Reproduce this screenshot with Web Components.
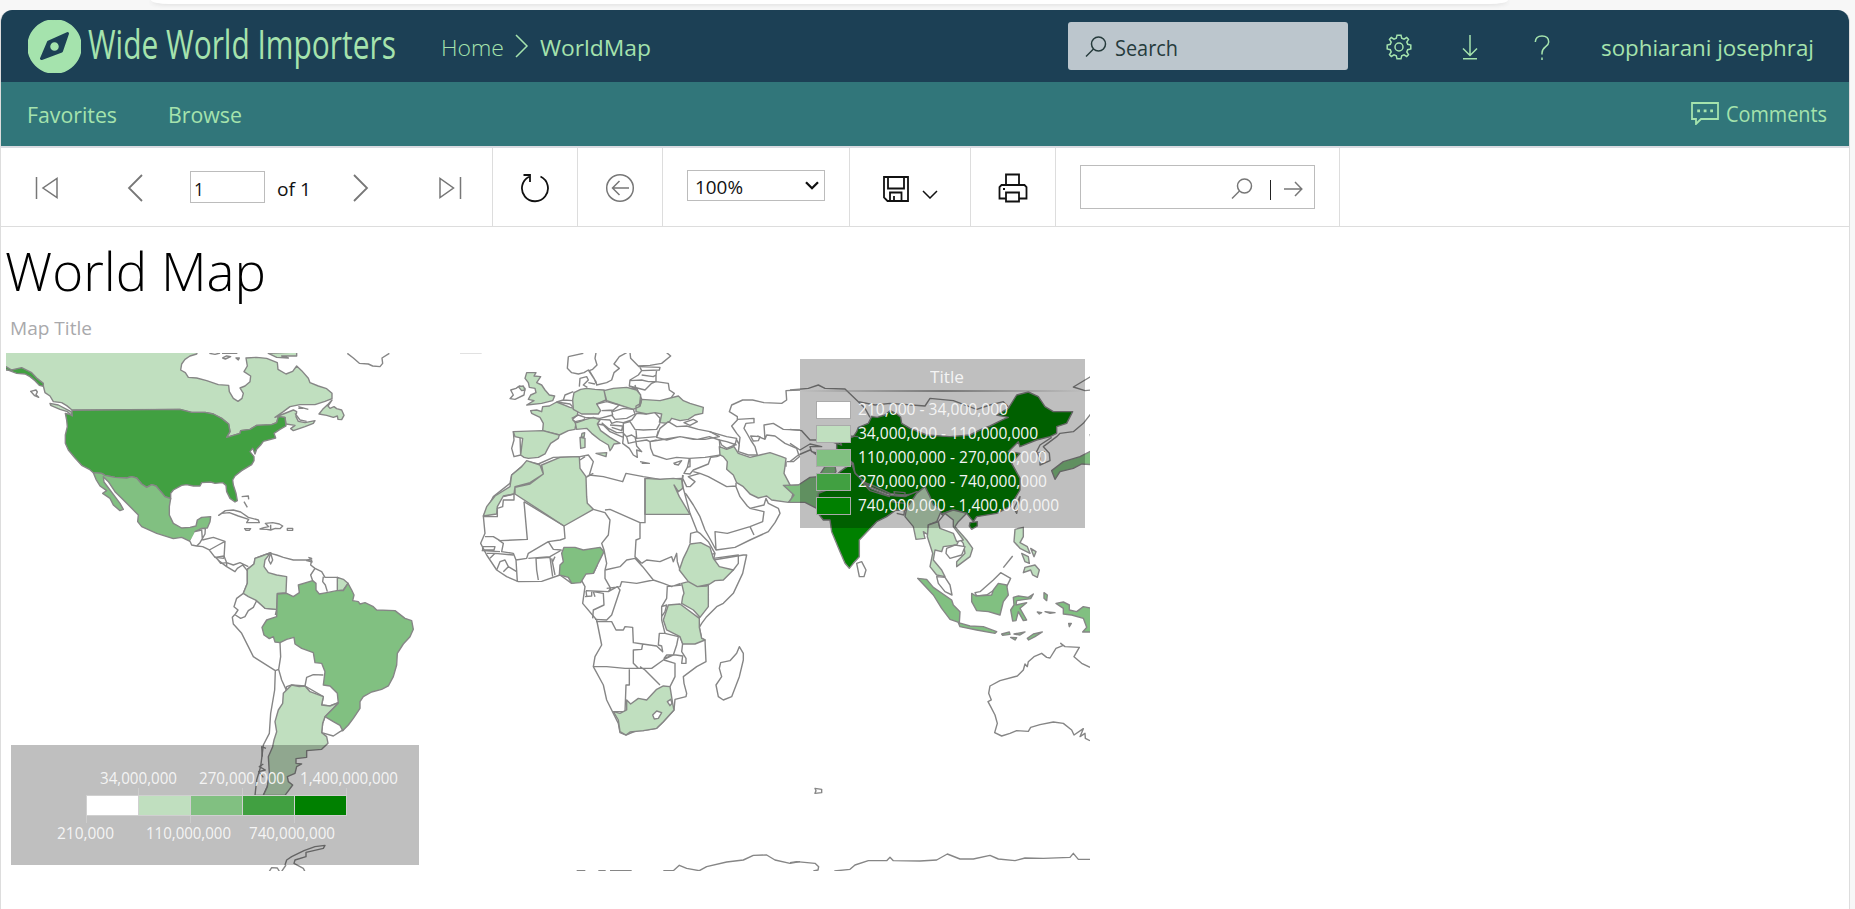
<!DOCTYPE html>
<html lang="en">
<head>
<meta charset="utf-8">
<title>World Map</title>
<style>
html,body{margin:0;height:100%;overflow:hidden;background:#f7f7f7;font-family:"Open Sans","Noto Sans",sans-serif}
</style>
</head>
<body>
<report-portal></report-portal>
<script>
const define=(name,html,setup)=>customElements.define(name,class extends HTMLElement{
  constructor(){super();const t=document.createElement('template');t.innerHTML=html;this.attachShadow({mode:'open'}).append(t.content.cloneNode(true))}
  connectedCallback(){if(setup)setup(this,this.shadowRoot)}
});

/* A single line of text squeezed or stretched to a given width. */
define('fit-text',`<style>:host{display:block;flex:none;white-space:nowrap;line-height:1.3}span{display:inline-block;transform-origin:0 50%}</style><span><slot></slot></span>`,
(h,r)=>{const s=r.querySelector('span'),w=+h.getAttribute('w');h.style.width=w+'px';h.style.fontSize=h.getAttribute('size')+'px';
  const n=s.offsetWidth||w;s.style.transform='translateY('+(h.getAttribute('dy')||0)+'px) scaleX('+(w/s.getBoundingClientRect().width||w/n)+')'});

const ICONS={
 logo:[53,53,'<circle cx="26.5" cy="26.500" r="26.500" fill="#a5e3ad"/><path d="M13.500 38.500 20.500 22 39.500 13.500 33.500 31Z" fill="#1c4055" stroke="#1c4055" stroke-width="3" stroke-linejoin="round"/><circle cx="26.5" cy="26.500" r="3.500" fill="#a5e3ad"/>'],
 crumb:[14,24,'<path d="M1 1 12 12 1 23"/>'],
 lens:[22,22,'<circle cx="13.500" cy="8" r="7"/><path d="M8.500 13 1 20.500"/>'],
 gear:[26,26,'<circle cx="13" cy="13" r="4"/><path d="M11 1.200H15L15.700 4.300 18 5.200 20.700 3.500 22.500 5.300 20.800 8 21.700 10.300 24.800 11V15L21.700 15.700 20.800 18 22.500 20.700 20.700 22.500 18 20.800 15.700 21.700 15 24.800H11L10.300 21.700 8 20.800 5.300 22.500 3.500 20.700 5.200 18 4.300 15.700 1.200 15V11L4.300 10.300 5.200 8 3.500 5.300 5.300 3.500 8 5.200 10.300 4.300Z"/>'],
 down:[16,25,'<path d="M8 0V20M1 13.500 8 20.500 15 13.500M1 23.700H15"/>'],
 help:[16,25,'<path d="M1.300 7C1.500 3 4 1 8 1 12 1 14.700 3.300 14.700 7 14.700 12 8 11.500 8 18V19.500M8 22.500V25"/>'],
 comment:[28,23,'<path d="M1 1H27V17H10L5 22V17H1Z" stroke-width="1.800"/><path d="M6.200 7.500h2.800v2.800h-2.800zM12.700 7.500h2.800v2.800h-2.800zM19.200 7.500h2.800v2.800h-2.800z" fill="currentColor" stroke="none"/>'],
 first:[24,24,'<path d="M1.500 1V23M22 2.500V21.500L8 12Z"/>'],
 last:[24,24,'<path d="M22.500 1V23M2 2.500V21.500L15.500 12Z"/>'],
 prev:[16,28,'<path d="M15 1 2 14 15 27" stroke-width="1.800"/>'],
 next:[16,28,'<path d="M1 1 14 14 1 27" stroke-width="1.800"/>'],
 refresh:[30,30,'<path d="M20.500 3.500A13 13 0 1 1 9 3.700M3.500 2H10V9" stroke-width="1.800"/>'],
 back:[30,30,'<circle cx="15" cy="15" r="13.300"/><path d="M24 15H7.500M14.500 8 7.500 15 14.500 22"/>'],
 caret:[14,9,'<path d="M1 1.200 7 7.200 13 1.200" stroke-width="2.300"/>'],
 save:[26,26,'<path d="M1 1H25V25H4.500L1 21.500ZM5 1V12.500H21V1M7 25V16.500H18.500V25M11 25V20" stroke-width="1.800"/>'],
 small:[16,9,'<path d="M1 1 8 8 15 1"/>'],
 print:[30,30,'<path d="M8 12V1.500H21V12M8 25.500H1.500V14L3.500 12H26.500L28.500 14V25.500H21M8 19.500H21V28.500H8Z" stroke-width="1.800"/><path d="M5 15h2v2h-2z" fill="currentColor" stroke="none"/>'],
 go:[19,16,'<path d="M0 8H17.500M11 1 17.800 8 11 15"/>']
};
define('app-icon',`<style>:host{display:block;flex:none}svg{display:block;fill:none;stroke:currentColor;stroke-width:1.5}</style><div></div>`,
(h,r)=>{const [w,t,p]=ICONS[h.getAttribute('name')];r.querySelector('div').innerHTML='<svg width="'+w+'" height="'+t+'" viewBox="0 0 '+w+' '+t+'">'+p+'</svg>'});

define('portal-header',`<style>
:host{display:flex;align-items:center;height:72px;background:#1c4055;color:#a5e3ad}
app-icon{margin-left:var(--g)}fit-text{margin-left:var(--g)}
.home{font-weight:300}
.search{display:flex;align-items:center;margin-left:auto;width:280px;height:48px;border-radius:3px;background:#bcc6cd;color:#263b3c;box-sizing:border-box;padding-left:17px}
</style>
<app-icon name="logo" style="--g:26.5px"></app-icon>
<fit-text w="308" size="39.500" dy="-1.500" style="--g:7px">Wide World Importers</fit-text>
<fit-text class="home" w="63" size="22.500" dy="2" style="--g:45px">Home</fit-text>
<app-icon name="crumb" style="--g:11px"></app-icon>
<fit-text w="111" size="22.500" dy="2" style="--g:11.5px">WorldMap</fit-text>
<div class="search"><app-icon name="lens" style="margin-top:2px"></app-icon><fit-text w="63" size="21.500" dy="1.500" style="--g:8px">Search</fit-text></div>
<app-icon name="gear" style="--g:38px;margin-top:2px"></app-icon>
<app-icon name="down" style="--g:50px;margin-top:2px"></app-icon>
<app-icon name="help" style="--g:56px;margin-top:2px"></app-icon>
<fit-text w="213" size="22.500" dy="2" style="margin:0 35px 0 51.500px">sophiarani josephraj</fit-text>`);

define('portal-nav',`<style>
:host{display:flex;align-items:center;height:64px;background:#31767a;color:#a5e3ad;border-bottom:2px solid #d9dbe1;padding:0 22px 0 26px}
.b{margin-left:51px}app-icon{margin:-2px 7px 0 auto}
</style>
<fit-text w="90" size="22" dy="-0.500">Favorites</fit-text><fit-text class="b" w="74" size="22" dy="-0.500">Browse</fit-text>
<app-icon name="comment"></app-icon><fit-text w="101" size="21.500" dy="0">Comments</fit-text>`);

define('tool-group',`<style>:host{display:flex;align-items:center;box-sizing:border-box;height:78px;border-right:1px solid #ddd;flex:none}</style><slot></slot>`);

define('report-toolbar',`<style>
:host{display:flex;height:78px;border-bottom:1px solid #ddd;color:#111}
.g{color:#777}
tool-group>app-icon{margin-top:2px}
.box{box-sizing:border-box;border:1px solid #bcbcbc;display:flex;align-items:center;flex:none}
.bar{width:1px;height:20px;background:#222;margin:5px 13px 0 17px}
</style>
<tool-group style="width:492px">
<app-icon class="g" name="first" style="margin-left:34px"></app-icon>
<app-icon class="g" name="prev" style="margin-left:68px"></app-icon>
<div class="box" style="width:75px;height:32px;margin-left:47px;padding-left:2.500px"><fit-text w="10" size="19" dy="1.500">1</fit-text></div>
<fit-text w="34" size="19" dy="1.500" style="margin-left:12px">of 1</fit-text>
<app-icon class="g" name="next" style="margin-left:42px"></app-icon>
<app-icon class="g" name="last" style="margin-left:69px"></app-icon>
</tool-group>
<tool-group style="width:85px;justify-content:center"><app-icon name="refresh"></app-icon></tool-group>
<tool-group style="width:85px;justify-content:center"><app-icon class="g" name="back"></app-icon></tool-group>
<tool-group style="width:187px;padding:0 0 3px 24px"><div class="box" style="width:138px;height:31px;padding:0 5px 0 7px;justify-content:space-between"><fit-text w="48" size="19" dy="1.500">100%</fit-text><app-icon name="caret"></app-icon></div></tool-group>
<tool-group style="width:121px;padding-left:33px"><app-icon name="save" style="margin-top:3px"></app-icon><app-icon name="small" style="margin:15px 0 0 13px"></app-icon></tool-group>
<tool-group style="width:85px;justify-content:center"><app-icon name="print"></app-icon></tool-group>
<tool-group style="width:284px;padding-left:24px"><div class="box" style="width:235px;height:44px;padding-right:11px;justify-content:flex-end"><app-icon class="g" name="lens" style="margin-top:3px"></app-icon><div class="bar"></div><app-icon class="g" name="go" style="margin:3px 0 0 0"></app-icon></div></tool-group>`);

define('world-map',`<style>
:host{display:block;width:1084px;height:518px}
svg{display:block}
path{stroke:#868686;stroke-width:4.200;fill:none;stroke-linejoin:round}
.w{fill:#fff}.a{fill:#c0dfbf}.b{fill:#81c081}.c{fill:#41a041}.d{fill:#008000}
</style>
<svg width="1084" height="518" viewBox="6 353 1084 518">
<g transform="translate(0 230) scale(.33333)">
<path class="a" d="M0 360 594 360 590 372 570 378 555 388 545 402 542 420 556 428 565 442 590 444 620 452 655 464 686 466 688 485 700 505 714 514 726 505 730 490 720 474 735 468 750 455 752 438 732 425 742 408 738 384 770 382 800 385 832 398 834 418 858 432 878 424 890 408 905 422 925 445 930 458 955 468 980 476 996 490 996 506 975 514 945 524 900 524 870 530 850 545 825 562 850 552 880 540 890 545 888 560 895 574 915 578 945 572 940 580 915 590 880 602 872 596 885 586 858 582 855 562 835 560 830 578 815 584 770 586 750 598 722 602 720 610 680 622 690 605 686 582 665 565 640 552 615 547 575 547 540 538 216 540 200 527 185 518 160 515 150 498 135 488 130 468 105 450 90 432 60 420 18 420 0 415Z"/>
<path class="c" d="M0 408 18 410 35 420 65 413 95 428 112 446 130 460 130 469 118 466 105 452 90 440 75 432 50 430 18 418Z"/>
<path class="c" d="M216 541 540 538 575 547 615 547 640 552 665 565 686 582 690 605 680 622 720 610 722 602 750 598 770 586 815 584 830 578 835 560 855 562 858 588 840 598 822 610 827 624 790 634 782 645 770 658 765 672 758 655 750 665 762 680 762 692 755 704 725 722 705 738 698 750 700 765 708 790 712 812 705 816 690 805 680 785 678 766 668 758 645 760 632 756 605 758 600 768 580 768 560 764 545 766 520 780 512 790 512 806 495 800 480 782 468 768 455 764 440 772 425 762 410 744 395 740 380 744 345 742 315 736 305 730 280 728 268 718 245 706 225 684 205 660 196 640 196 615 202 590 200 570 196 550 216 555Z"/>
<path class="b" d="M280 728 305 730 315 736 345 742 380 744 395 740 410 744 425 762 440 772 455 764 468 768 480 782 495 800 512 806 508 830 508 855 520 880 545 894 570 892 588 888 592 870 605 862 632 860 630 875 622 894 605 895 585 905 582 920 570 934 545 922 520 926 470 910 425 890 413 875 415 855 395 835 365 805 345 785 325 755 310 740 312 756 330 780 345 800 360 820 370 838 360 842 340 825 330 805 308 790 320 782 300 768 288 748Z"/>
<path class="a" d="M996 510 985 522 968 538 957 552 980 556 1000 562 1012 558 1014 568 1025 569 1032 556 1025 540 1010 536 1002 530 990 535 984 528ZM150 520 175 525 200 538 213 545 217 558 202 545 180 538 152 526ZM805 370 890 366 890 378 845 378 865 384 830 382Z"/>
<path class="w" d="M92 484 108 480 112 486 108 494 116 502 104 497ZM628 370 645 373 660 369M666 370 712 370M668 384 680 378 692 380 676 387ZM708 384 718 384 715 390ZM1042 370 1060 384 1078 400 1105 402 1118 408 1140 410 1148 400 1146 384 1168 370M895 530 925 538M885 550 900 570 920 574M895 535 910 535M725 800 745 798 746 808M732 815 742 832M656 856 676 842 700 840 722 846 745 862 775 870 778 878 740 878 746 868 715 858 688 848 665 850ZM734 896 752 896 748 901 738 901ZM780 897 800 898 812 900 826 895 840 896 848 888 838 882 818 878 796 880 806 890 792 893ZM812 884 812 900M862 895 878 895 878 901 862 901ZM585 905 605 900 607 926 600 938 590 948 575 945 570 934M605 896 616 896 615 912 607 926M607 930 640 922 675 934 655 945 628 960 608 950 590 948M675 934 672 985M628 960 645 982 672 985"/>
</g>
<g transform="translate(0 540) scale(.33333)">
<path class="w" d="M812 38 785 48 765 55 762 72 742 88 742 130 730 160 710 175 702 200 714 210 706 222 697 232 700 252 725 280 745 320 760 350 826 392 824 450 812 520 808 580 790 615 782 680 770 720 765 766 790 766 802 740 860 440 875 435 915 438 970 470 965 495 990 498 1015 488 975 530 968 550 965 578 1000 588 1020 575 1030 570 1030 150 1042 132 1012 112 975 112 965 95 945 85 932 75 935 60 880 60 850 52 830 45 812 40 818 60 812 72 806 60Z"/>
<path d="M798 625 785 620 787 650M790 672 778 680 796 690 776 695 790 712M770 182 760 202 745 212 735 230 722 235 706 225M770 182 795 205 830 208 826 225M836 388 842 350 840 308M826 392 836 388 845 420 858 448M915 438 920 412 940 404 970 405M938 122 932 105 945 85M970 110 968 125 976 135 982 155M925 52 935 55 920 62 938 66M645 50 660 65 680 80 705 95 712 85 728 75 742 92M672 48 645 52M672 48 680 68 700 75 720 68 745 80M648 52 662 70 680 68 680 80"/>
<path class="a" d="M812 38 785 48 765 55 762 72 742 88 742 130 730 160 745 170 770 182 795 205 830 208 832 160 858 158 860 110 830 105 805 98 792 80 795 60ZM1012 112 1030 118 1044 130 1030 150 1012 152Z"/>
<path class="a" d="M875 435 898 440 915 438 930 455 970 470 965 495 990 498 1015 488 1000 505 975 530 968 550 965 578 980 590 984 610 965 628 920 632 920 652 888 656 888 670 905 672 890 680 885 700 862 710 865 725 878 735 855 766 790 766 802 740 808 700 805 650 818 620 822 600 830 575 825 545 835 510 848 490 850 460Z"/>
<path class="b" d="M938 122 948 130 948 150 958 162 980 158 1010 152 1030 152 1044 130 1055 150 1062 165 1058 182 1075 185 1080 192 1095 188 1120 200 1130 210 1185 212 1215 235 1235 242 1240 268 1230 290 1210 312 1192 340 1190 375 1180 410 1165 438 1145 448 1115 456 1090 470 1080 485 1080 505 1060 535 1045 555 1028 572 1020 556 1000 545 975 530 1015 490 1012 460 990 438 970 435 975 395 965 370 945 368 940 338 905 325 885 312 882 292 860 298 840 308 825 306 820 290 808 296 792 285 786 262 800 240 830 230 832 162 860 160 880 170 898 158 895 135Z"/>
<path d="M855 975 860 960 875 950 912 932 945 920 975 916 970 925 918 937 918 950 885 960 882 970 910 985 915 995M808 994 815 983 832 984 838 994M845 994 858 975"/>
</g>
<g transform="translate(460 340) scale(.33333)">
<path d="M0 38 65 38M325 50 322 85 335 98 355 102 372 98 385 90 408 125 410 135 440 128 455 120 462 98 478 85 462 72 478 50 500 38M325 50 370 40M408 38 405 55 411 75 398 88 388 92 402 115 408 130M510 38 512 55 535 78 570 76 605 70 632 48 620 38M535 80 600 82 598 90 545 92 540 82M545 92 535 105 510 120 508 138 530 145 540 165 545 178M545 105 580 110 588 105 590 90M510 122 545 120 565 125 588 125 588 105M508 138 555 150 575 130 588 125 625 130 628 150 643 160 632 175M358 140 360 115 380 110 385 120 370 135 382 142M385 128 405 132M500 145 528 145 525 135"/>
<path class="w" d="M152 150 168 145 178 138 195 145 192 165 165 178 150 176 160 165ZM160 275 180 290 182 345 162 350 155 325 162 300Z"/>
<path class="a" d="M200 98 228 98 222 108 242 110 230 128 245 135 255 150 268 165 284 168 278 182 245 190 200 195 222 182 205 178 212 165 228 158 225 145 208 142 205 128 195 115ZM175 140 190 138 195 150 185 152Z"/>
<path class="a" d="M212 212 230 210 245 215 248 200 268 198 290 186 330 202 355 208 352 225 338 238 348 250 345 268 325 272 298 285 248 272 250 250 240 232 215 220Z"/>
<path class="a" d="M160 275 248 272 298 285 295 295 272 310 262 328 255 342 235 352 205 355 192 352 182 345 188 295 165 290Z"/>
<path class="a" d="M342 158 362 148 380 145 405 148 432 150 438 180 410 192 422 212 415 222 365 222 340 208 338 180ZM432 152 460 145 500 142 530 150 542 165 538 200 520 208 478 195 440 182ZM545 178 600 182 655 168 670 182 690 190 730 202 728 220 705 225 685 238 660 242 635 235 625 250 600 248 605 222 585 218 560 222 528 215 528 198 542 190ZM345 245 378 238 400 232 420 240 412 252 422 272 450 292 480 310 462 312 455 325 450 332 445 315 420 300 395 280 380 265 350 268ZM408 340 440 338 438 350ZM360 292 375 295 375 322 362 325ZM366 280 374 278 372 292 364 290Z"/>
<path d="M290 186 310 180 315 165 340 155M290 186 330 192 338 200M310 180 338 182M335 235 355 225 375 232 372 240 350 248 338 240M372 232 420 235 458 225 455 212 425 212M410 192 440 185 478 195 460 210 425 212M458 215 490 205 520 208 525 222 500 235 465 238 455 225M420 238 450 240 455 250 470 245 490 248 515 240M412 252 430 255 450 275 490 292 490 250 510 245 525 268 550 270 590 268 600 250M425 248 445 265 470 278 490 278M450 255 488 258 485 272 455 262M490 280 500 290 515 285 530 295 590 290 595 272M490 292 488 310 508 325 520 345 532 352 530 330 545 335 530 318 528 305 560 300 570 305 590 300M500 290 505 310 528 305 525 290M515 240 530 220 560 222M545 178 540 200 M585 218 600 235 598 248M530 295 528 270M540 365 568 370 545 370M640 370 665 362 655 375 642 372M672 248 700 238 712 245 690 256Z"/>
<path class="w" d="M570 305 600 300 660 290 712 298 748 290 778 300 782 345 735 352 688 355 650 352 620 358 580 345 572 325ZM590 292 600 265 625 245 650 260 680 258 715 268 750 275 778 290 735 298 700 298 660 290 620 300Z"/>
<path d="M748 275 800 290 830 295 825 315 800 325 785 315 778 300 800 305 830 315M828 295 838 315 835 335M1020 150 978 152 980 180 965 190 912 188 878 180 848 180 815 195 808 215 832 230 832 240 815 258 830 280 840 292 835 335 865 345 892 345 885 320 872 300 862 282 852 265 858 250 882 248 882 235 832 238M872 288 900 290 895 302 880 303ZM892 288 915 298 912 255 940 250 970 268 1020 270M915 298 920 285 945 288 975 310 1010 325 1018 350 1000 365 980 365"/>
<path class="a" d="M778 320 800 328 822 320 835 340 870 352 900 345 930 338 965 350 978 355 975 380 972 400 985 425 1000 455 995 475 985 487 935 480 920 468 895 474 870 462 850 440 830 428 820 405 800 388 802 365 790 350 780 345Z"/>
<path d="M978 365 978 380M985 437 1020 435"/>
<path d="M688 355 682 382 672 400 690 402 700 390 745 372 752 352M670 405 668 415 680 440 690 440 705 425 685 410 720 400 745 410 800 440 828 438 828 428M682 382 690 380 690 355M700 395 720 400M752 352 770 350 782 345M658 448 678 462 700 495 720 530 735 570 752 600 768 630 825 622 870 600 925 575 945 548 960 520 955 505 925 490 918 475 912 495 870 505 862 498 840 470 828 440M768 630 765 575 802 580 870 560 908 545 912 515 870 505M870 560 882 585M668 405 665 440 658 448"/>
<path class="w" d="M205 365 235 372 280 352 360 350 385 345 400 365 388 405 430 410 488 425 498 400 550 410 600 418 665 415 670 445 690 520 712 575 720 580 745 605 765 640 760 660 850 645 860 645 848 700 820 760 790 790 770 800 740 830 725 850 718 862 725 895 735 900 738 965 710 980 670 1010 672 1030 680 1060 678 1070 645 1078 642 1110 610 1145 590 1165 550 1172 530 1172 498 1185 480 1178 475 1150 440 1080 430 1035 400 980 405 950 425 915 410 840 368 790 375 740 365 722 335 730 300 705 245 724 175 725 140 710 110 690 80 645 62 610 75 580 70 528 100 470 150 430 155 405 190 375Z"/>
<path class="a" d="M200 362 240 375 250 402 210 428 165 440 162 462 130 468 112 500 110 522 70 528 80 500 105 468 150 440 155 405 185 380ZM245 375 300 352 358 350 360 385 378 410 380 470 382 490 400 508 312 558 165 462 165 442 210 432 250 402ZM555 415 600 418 640 415 665 418 668 445 655 455 642 435 658 470 690 523 555 523Z"/>
<path d="M378 412 392 405M360 360 375 350M130 470 162 462 162 480 130 480 128 500 112 505 112 530 70 530M192 485 202 598 120 602 100 590 75 590M192 485 312 558 315 595 300 600 265 605 205 640 200 655 168 660 160 640 125 635 130 610 115 600M380 410 400 400M400 508 435 518 450 540 445 585 425 610 432 630M435 510 450 508 540 548 555 548 555 415M540 548 540 595 528 600 525 650 545 670M265 605 280 628 305 630M305 630 270 650 205 655M168 660 172 725M228 655 230 690 235 720M230 655 270 652 278 710M275 655 285 705M285 650 278 665M90 655 105 640 160 645M68 620 105 620 102 630 68 630ZM65 632 120 635M80 640 105 640M110 690 120 665 135 660 145 680 130 695M145 680 170 695M432 630 440 670 435 690M545 670 560 660 600 665 635 650 640 665 650 640 652 665 660 690M435 690 480 680 500 660 525 655 548 680 580 720M440 745 480 740 485 725 530 730 580 720 610 730 635 740 662 730M435 690 435 715 452 745 445 755 378 752M375 770 395 768 395 755M378 752 380 768M405 770 400 755 430 760 432 795 400 810 398 835M400 700 412 675M445 755 472 740 480 750 455 825 440 840 405 838M408 845 455 845 468 870 490 870 495 860 518 862 520 908 548 912 545 928 520 930 520 970 535 985M400 980 440 980 495 985 575 985 610 960 640 945 612 955 620 945 648 945M548 912 590 918 608 935 605 918 595 915 598 880 618 880M508 988 508 1035 498 1035 495 1115 460 1115M540 980 555 990 600 1035M612 960 645 970 645 1010 630 1040M622 738 620 775 605 800 605 840 615 880 655 890 650 915 640 945M605 800 620 795 615 815 605 830M620 740 665 735M660 890 668 910 665 935 678 955 678 970 665 970 668 948 648 945M690 610 692 580 712 575M765 640 750 645 760 655 835 645 835 670 820 690 775 685 760 660M745 800 745 733"/>
<path class="b" d="M305 640 312 622 345 622 370 630 420 622 432 635 412 675 400 700 378 702 362 728 335 730 325 712 298 705 300 675 310 665Z"/>
<path class="a" d="M690 612 722 608 750 622 760 655 778 680 820 690 790 720 765 722 740 738 712 740 685 725 658 690 670 655 680 635ZM665 730 685 725 712 740 745 733 745 800 720 832 700 810 665 790 668 770 672 760ZM625 795 660 792 718 835 718 862 725 895 735 900 705 912 668 912 660 890 620 870 610 840ZM460 1115 480 1120 500 1110 500 1080 512 1092 535 1075 560 1080 590 1048 610 1038 630 1040 638 1090 642 1110 610 1145 590 1165 550 1172 510 1176 498 1185 480 1175 475 1140Z"/>
<path class="w" d="M578 1125 590 1113 605 1118 595 1135 583 1137ZM622 1085 632 1078 636 1090 630 1097ZM838 920 850 940 850 960 838 1010 815 1070 790 1080 775 1070 768 1035 785 1010 778 985 782 968 810 962 830 940Z"/>
<path d="M350 1592H376M415 1592H437M450 1592H515M610 1592H640L658 1576 680 1585 718 1592 740 1580 800 1566 850 1560 880 1546 920 1545 945 1560 990 1570 1020 1565"/>
</g>
<g transform="translate(790 340) scale(.33333)">
<path d="M0 150 55 145 85 135 105 145 165 147 205 185 255 195 300 190 405 198 420 175 490 182 560 208 600 195 640 185 655 200M205 185 225 205 240 232M905 108 850 141 885 152 905 150"/>
<path class="d" d="M140 310 190 290 200 275 205 262 235 250 245 230 262 232 285 225 300 212 320 222 332 232 335 250 360 265 410 285 480 290 540 285 570 270 600 258 640 238 655 232 620 225 655 205 680 165 715 156 745 170 765 200 790 215 848 215 830 250 800 260 800 280 780 290 740 300 690 320 685 305 655 335 690 340 665 370 690 415 690 450 660 500 620 520 560 530 550 545 530 520 490 510 455 522 430 500 410 455 380 460 345 465 290 460 240 440 195 400 190 370 140 330Z"/>
<path class="d" d="M540 548 562 545 562 558 545 568 538 558Z"/>
<path class="b" d="M-20 436 25 435 60 412 85 410 105 380 135 378 138 395 115 425 95 455 80 505 45 487 -4 487 12 465Z"/>
<path class="d" d="M85 460 110 450 120 420 150 395 185 370 195 400 215 420 240 445 290 465 345 470 380 455 400 460 365 495 345 512 318 510 290 530 260 545 208 600 208 650 190 670 178 685 165 670 150 635 125 575 120 540 100 540 80 515Z"/>
<path d="M215 425 245 435 300 460 298 470 240 452ZM312 455 345 458 345 468 315 467ZM305 485 345 490 342 525 320 520" fill="#fff"/>
<path class="a" d="M380 460 405 440 420 470 430 495 455 510 440 545 415 555 415 585 400 575 405 595 378 598 370 560 345 530 350 505 360 490Z"/>
<path class="a" d="M415 555 445 545 450 565 495 570 510 595 500 615 460 620 455 635 435 630 430 660 455 690 465 710 440 705 420 680 428 640 412 590ZM455 522 490 510 530 520 505 545 495 560 530 600 548 625 540 650 500 680 500 665 525 640 520 610 495 580 480 550Z"/>
<path class="w" d="M200 670 215 665 228 690 222 710 208 710ZM445 545 465 520 490 540 490 560 520 600 500 605 490 580 450 565ZM470 625 495 615 525 620 515 645 480 655 468 640ZM690 470 680 520 672 505ZM440 710 465 712 480 735 486 765 465 755 445 730Z"/>
<path class="a" d="M675 568 700 562 700 590 690 608 712 620 720 640 690 625 672 605ZM735 675 748 690 742 712 728 705 722 690 700 698 705 682ZM695 640 715 650 718 670 705 665ZM722 625 738 635 732 650Z"/>
<path d="M640 683 668 648"/>
<path class="w" d="M555 758 570 755 610 720 632 698 662 715 650 740 620 745 590 765 560 768Z"/>
<path d="M785 292 750 315 740 335 750 355 750 375 780 362 778 340 760 320 800 290 810 280 850 275 880 250 905 218M745 338 765 335"/>
<path class="b" d="M905 332 870 350 820 365 785 392 795 418 810 395 850 385 875 372 905 374Z"/>
<path d="M0 268 35 272 60 300 110 300 155 315 140 285 205 290M0 310 30 330 60 312 95 320 60 320 65 335 105 345M0 365 25 345 60 330 80 345M900 282 902 290"/>
</g>
<g transform="translate(790 540) scale(.33333)">
<path class="b" d="M383 115 410 118 430 142 485 180 490 195 510 215 508 248 480 238 455 205 430 165ZM505 248 540 258 580 260 620 275 615 280 560 270 510 260ZM545 160 558 168 605 165 610 150 625 130 650 135 655 165 640 185 630 225 595 215 560 212 545 185ZM670 172 685 168 715 172 730 162 722 176 680 182 678 195 710 188 690 205 710 240 700 242 685 215 678 242 668 243 662 210 672 195ZM762 158 772 165 770 182 762 175ZM798 190 820 186 838 195 838 210 860 215 880 200 905 205V276H878L890 262 880 235 845 225 820 222 820 205ZM635 282 658 276 660 283 638 286ZM672 282 705 276 690 285ZM662 292 680 293 675 300ZM712 295 730 282 757 276 735 290 716 300ZM742 216 755 218 748 222ZM765 215 795 218 780 220ZM836 250 844 250 838 260Z"/>
<path d="M900 382 875 370 852 350 868 322 825 320 812 310 820 316 798 325 780 354 770 352 755 340 732 350 715 365 712 380 705 372 700 390 682 408 630 422 600 438 596 460 604 480 594 485 602 500 615 525 622 550 614 578 635 588 660 580 680 572 715 574 722 562 750 554 790 546 820 550 845 570 852 585 880 566 870 590 885 580 886 595 900 602"/>
<path d="M75 745 95 748 95 758 75 760 78 752ZM0 968 20 965 75 970 86 980 84 990 70 993M133 993 180 988 195 975 235 962 290 962 300 952 310 962 390 963 440 960 472 942 510 957 550 957 600 946 625 957 675 962 705 954 760 955 840 952 850 940 865 958 905 958"/>
</g>
</svg>`);

define('map-legend',`<style>
:host{position:absolute;box-sizing:border-box;width:284.500px;height:169px;background:rgba(0,0,0,.25);color:#f4f4f4;padding-top:8px}
.t{display:flex;justify-content:center;margin-left:9px}
hr{height:2px;border:0;margin:3px 0 6px;background:linear-gradient(90deg,transparent,#777,transparent)}
.r{display:flex;align-items:center;height:24px;margin-left:16px}
.r i{box-sizing:border-box;width:34.500px;height:18px;border:1px solid #aaa;margin-right:7px;flex:none}
</style><div class="t"><fit-text w="34" size="16">Title</fit-text></div><hr><div id="rows"></div>`,
(h,r)=>{r.querySelector('#rows').innerHTML=[['210,000 - 34,000,000',150,'#fff'],['34,000,000 - 110,000,000',180,'#c0dfbf'],['110,000,000 - 270,000,000',189,'#81c081'],['270,000,000 - 740,000,000',189,'#41a041'],['740,000,000 - 1,400,000,000',201,'#008000']]
 .map(([t,w,c])=>'<div class="r"><i style="background:'+c+'"></i><fit-text w="'+w+'" size="16" dy="-1">'+t+'</fit-text></div>').join('')});

define('color-scale',`<style>
:host{position:absolute;box-sizing:border-box;width:407.500px;height:120px;background:rgba(0,0,0,.25);color:#f4f4f4;padding-top:23px}
.l{display:flex;height:20px}
.bar{display:flex;margin-left:75px;margin-top:0;padding:7px 0;width:260.500px;background:
linear-gradient(#ccc,#ccc) 52px 0/1px 7px no-repeat,linear-gradient(#ccc,#ccc) 156px 0/1px 7px no-repeat,linear-gradient(#ccc,#ccc) 259.500px 0/1px 7px no-repeat,
linear-gradient(#ccc,#ccc) 0 100%/1px 7px no-repeat,linear-gradient(#ccc,#ccc) 104px 100%/1px 7px no-repeat,linear-gradient(#ccc,#ccc) 208px 100%/1px 7px no-repeat}
.bar i{flex:1;height:21px;box-sizing:border-box;border:1px solid #d0d0d0;border-right-width:0}.bar i:last-child{border-right-width:1px}
</style>
<div class="l" style="margin-left:88.500px;gap:22px"><fit-text w="77" size="16">34,000,000</fit-text><fit-text w="86" size="16">270,000,000</fit-text><fit-text w="98" size="16" style="margin-left:-7px">1,400,000,000</fit-text></div>
<div class="bar"><i style="background:#fff"></i><i style="background:#c0dfbf"></i><i style="background:#81c081"></i><i style="background:#41a041"></i><i style="background:#008000"></i></div>
<div class="l" style="margin-left:46px"><fit-text w="57" size="16">210,000</fit-text><fit-text w="85" size="16" style="margin-left:32px">110,000,000</fit-text><fit-text w="86" size="16" style="margin-left:18px">740,000,000</fit-text></div>`);

define('report-view',`<style>
:host{display:block;padding:8px 0 0 5px}
.h{font-weight:300;color:#000;height:70px;margin-left:-1px}.m{color:#a9a9ac;height:24px;margin:11px 0 0 4px}
.map{position:relative;width:1084px;height:518px;margin-top:13px}
map-legend{left:794px;top:5.500px}color-scale{left:5.300px;top:392.300px}
</style>
<fit-text class="h" w="261" size="54">World Map</fit-text>
<fit-text class="m" w="82" size="19">Map Title</fit-text>
<div class="map"><world-map></world-map><map-legend></map-legend><color-scale></color-scale></div>`);

define('report-portal',`<style>
:host{display:block;box-sizing:border-box;height:909px;overflow:hidden}
.tab{height:4px;margin:0 347px 6px 151px;background:#fff;border-radius:0 0 18px 18px/0 0 4px 4px;box-shadow:0 1px 4px #ddd}
.page{box-sizing:border-box;width:1850px;height:900px;background:#fff;border:1px solid #ddd;border-top:0;border-bottom:0;border-radius:12px 12px 0 0;overflow:hidden}
</style><div class="tab"></div><div class="page"><portal-header></portal-header><portal-nav></portal-nav><report-toolbar></report-toolbar><report-view></report-view></div>`);
</script>
</body>
</html>
